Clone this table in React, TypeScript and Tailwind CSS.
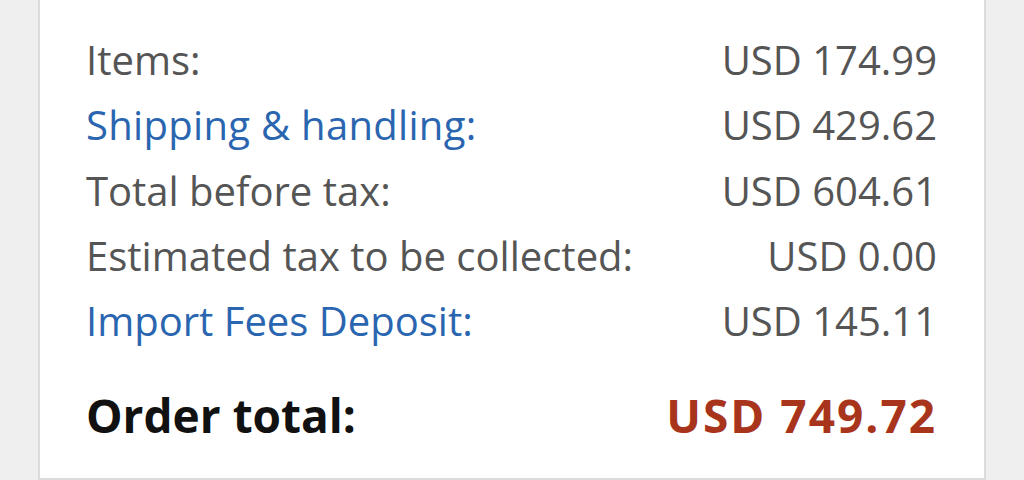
import React from 'react';

type Row = { label: string; value: string; link?: boolean; wide?: boolean };

const rows: Row[] = [
    { label: 'Items:', value: 'USD 174.99' },
    { label: 'Shipping & handling:', value: 'USD 429.62', link: true, wide: true },
    { label: 'Total before tax:', value: 'USD 604.61' },
    { label: 'Estimated tax to be collected:', value: 'USD 0.00' },
    { label: 'Import Fees Deposit:', value: 'USD 145.11', link: true },
];

const App = () => {
    return (
        <div className="w-[1024px] h-[480px] bg-[#efefef] px-[38px] font-['Open_Sans',sans-serif]">
            <div className="h-[480px] bg-white border-x-2 border-b-2 border-[#dcdcdc] pl-[46px] pr-[47px] pt-[27px]">
                {rows.map((row) => (
                    <div key={row.label} className="flex justify-between h-[65.25px] leading-[65px] text-[40px] text-[#555555]">
                        <span className={(row.link ? 'text-[#2a65b0]' : '') + (row.wide ? ' tracking-[0.3px]' : '')}>{row.label}</span>
                        <span>{row.value}</span>
                    </div>
                ))}
                <div className="flex justify-between mt-[30px] leading-[65px] text-[46px] font-bold">
                    <span className="text-[#111111]">Order total:</span>
                    <span className="text-[#a9341c] tracking-[2px]">USD 749.72</span>
                </div>
            </div>
        </div>
    );
};

export default App;
